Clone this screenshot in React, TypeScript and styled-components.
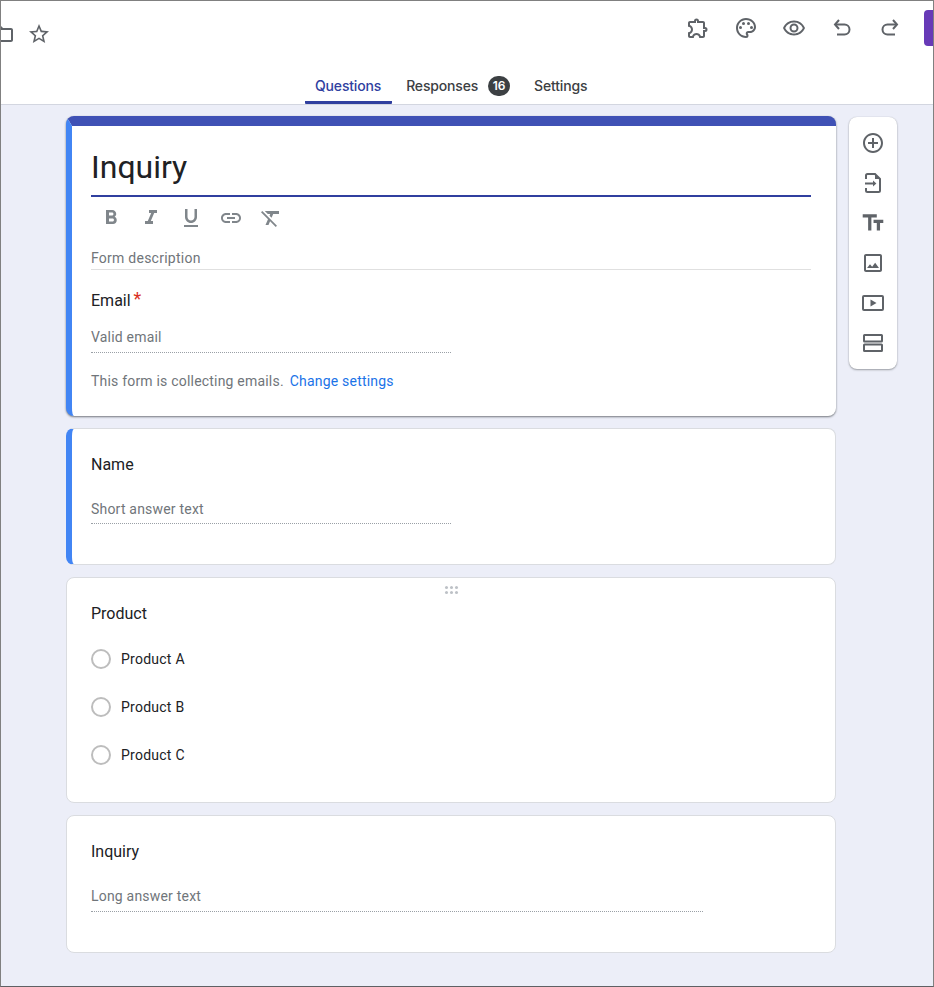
import React from 'react'
import styled, { createGlobalStyle } from 'styled-components'
import {
  MdAddCircleOutline,
  MdFolderOpen,
  MdFormatBold,
  MdFormatClear,
  MdFormatItalic,
  MdFormatUnderlined,
  MdLink,
  MdOutlineExtension,
  MdOutlineImage,
  MdOutlinePalette,
  MdOutlineRemoveRedEye,
  MdStarBorder,
  MdTextFields
} from 'react-icons/md'

const GlobalStyle = createGlobalStyle`
  * {
    box-sizing: border-box;
  }

  html,
  body {
    margin: 0;
    padding: 0;
    background: #ffffff;
  }

  body {
    font-family: Roboto, 'Liberation Sans', sans-serif;
  }
`

const Frame = styled.div`
  width: 934px;
  height: 987px;
  overflow: hidden;
  display: flex;
  flex-direction: column;
  border-top: 1px solid #808080;
  border-left: 1px solid #808080;
  border-right: 1px solid #808080;
  border-bottom: 1px solid #5f6064;
`

const Header = styled.header`
  height: 104px;
  flex-shrink: 0;
  background: #ffffff;
  border-bottom: 1px solid #d3d6e0;
  display: flex;
  flex-direction: column;
`

const TopRow = styled.div`
  height: 68px;
  display: flex;
  justify-content: space-between;
  align-items: flex-start;
`

const DocTools = styled.div`
  display: flex;
  align-items: center;
  gap: 14px;
  padding-top: 21px;
  color: #5f6368;
`

const FolderClip = styled.div`
  width: 12px;
  height: 24px;
  overflow: hidden;
  display: flex;
  justify-content: flex-end;

  svg {
    flex-shrink: 0;
    margin-right: -2px;
  }
`

const Actions = styled.div`
  display: flex;
  align-items: flex-start;
  color: #5f6368;
`

const ActionIcon = styled.span`
  width: 48px;
  height: 24px;
  margin-top: 15px;
  display: flex;
  align-items: center;
  justify-content: center;
`

const PublishEdge = styled.div`
  width: 9px;
  height: 36px;
  margin-top: 9px;
  margin-left: 10px;
  background: #673ab7;
  border-radius: 4px 0 0 4px;
`

const Tabs = styled.nav`
  flex: 1;
  display: flex;
  justify-content: flex-start;
  padding-left: 304px;
`

const Tab = styled.div<{ $active?: boolean }>`
  height: 36px;
  padding: 2px ${(p) => (p.$active ? 11 : 10)}px 0 10px;
  margin-right: 4px;
  display: flex;
  align-items: center;
  gap: 10px;
  font-family: Inter, Roboto, sans-serif;
  font-size: 14px;
  font-weight: 500;
  letter-spacing: -0.17px;
  color: ${(p) => (p.$active ? '#303f9f' : '#3c4043')};
  border-bottom: 3px solid ${(p) => (p.$active ? '#303f9f' : 'transparent')};
  border-radius: 0 0 1px 1px;
`

const Badge = styled.span`
  width: 22px;
  height: 20px;
  border-radius: 10px;
  background: #3c4043;
  color: #ffffff;
  font-size: 12px;
  font-weight: 600;
  letter-spacing: 0;
  display: flex;
  align-items: center;
  justify-content: center;
`

const Main = styled.main`
  flex: 1;
  background: #eceef8;
  padding: 11px 0 0 65px;
  display: flex;
  align-items: flex-start;
  gap: 13px;
`

const Column = styled.div`
  width: 770px;
  display: flex;
  flex-direction: column;
  gap: 12px;
`

const Card = styled.section<{ $height: number; $accent?: boolean }>`
  position: relative;
  height: ${(p) => p.$height}px;
  background: #ffffff;
  border-radius: 8px;
  border: 1px solid #dadce0;
  padding: 0 24px;
  overflow: hidden;
  ${(p) => p.$accent && 'border-left: 6px solid #4285f4; padding-left: 19px;'}
`

const HeadCard = styled.section`
  height: 300px;
  background: #ffffff;
  border-radius: 8px;
  border-top: 10px solid #3f51b5;
  border-left: 6px solid #4285f4;
  padding: 0 25px 0 19px;
  box-shadow: 0 1px 2px 0 rgba(60, 64, 67, 0.5), 0 1px 2px 0 rgba(60, 64, 67, 0.25);
`

const Title = styled.div`
  height: 71px;
  padding-top: 22px;
  border-bottom: 2px solid #303f9f;
  font-size: 32px;
  line-height: 38px;
  color: #202124;
`

const FormatBar = styled.div`
  height: 42px;
  padding-left: 8px;
  display: flex;
  align-items: center;
  gap: 16px;
  color: #80868b;
`

const FormatIcon = styled.span`
  width: 24px;
  height: 24px;
  display: flex;
  align-items: center;
  justify-content: center;
`

const Description = styled.div`
  height: 31px;
  padding-top: 9px;
  border-bottom: 1px solid #e0e0e0;
  font-size: 14px;
  line-height: 20px;
  letter-spacing: 0.25px;
  color: #70757a;
`

const Label = styled.div<{ $top: number }>`
  padding-top: ${(p) => p.$top}px;
  font-size: 16px;
  line-height: 24px;
  color: #202124;
`

const Required = styled.span`
  margin-left: 3px;
  font-size: 18px;
  line-height: 0;
  vertical-align: 1px;
  color: #d93025;
`

const AnswerLine = styled.div<{ $width: number; $top: number; $height: number }>`
  width: ${(p) => p.$width}px;
  margin-top: ${(p) => p.$top}px;
  height: ${(p) => p.$height}px;
  border-bottom: 1px dotted #9aa0a6;
  font-size: 14px;
  line-height: 20px;
  letter-spacing: 0.2px;
  color: #70757a;
`

const Notice = styled.div`
  margin-top: 18px;
  font-size: 14px;
  line-height: 20px;
  letter-spacing: 0.2px;
  color: #70757a;
`

const NoticeLink = styled.a`
  margin-left: 6px;
  color: #1a73e8;
`

const DragHandle = styled.span`
  position: absolute;
  top: 8px;
  left: 378px;
  display: grid;
  grid-template-columns: repeat(3, 3px);
  gap: 2px;

  & > i {
    width: 3px;
    height: 3px;
    border-radius: 50%;
    background: #bdc1c6;
  }
`

const Options = styled.div`
  margin-top: 9px;
  display: flex;
  flex-direction: column;
`

const Option = styled.div`
  height: 48px;
  display: flex;
  align-items: center;
  gap: 10px;
  font-size: 14px;
  letter-spacing: 0.25px;
  color: #202124;
`

const Radio = styled.span`
  width: 20px;
  height: 20px;
  border: 2px solid #bdbdbd;
  border-radius: 50%;
`

const SideBar = styled.aside`
  width: 48px;
  height: 252px;
  margin-top: 1px;
  padding: 6px 0;
  background: #ffffff;
  border-radius: 8px;
  color: #5f6368;
  display: flex;
  flex-direction: column;
  box-shadow: 0 1px 2px 0 rgba(60, 64, 67, 0.45), 0 0 1px 0 rgba(60, 64, 67, 0.25);
`

const SideIcon = styled.span`
  height: 40px;
  display: flex;
  align-items: center;
  justify-content: center;
`

const UndoIcon = () => (
  <svg width="24" height="24" viewBox="0 0 24 24" fill="none" stroke="currentColor" strokeWidth="2">
    <path d="M9 4L5 8.5L9 13" />
    <path d="M5 8.5h9.5a5 5 0 0 1 0 10H7" />
  </svg>
)

const RedoIcon = () => (
  <svg width="24" height="24" viewBox="0 0 24 24" fill="none" stroke="currentColor" strokeWidth="2">
    <path d="M15 4l4 4.5L15 13" />
    <path d="M19 8.5H9.5a5 5 0 0 0 0 10H17" />
  </svg>
)

const ImportIcon = () => (
  <svg width="24" height="24" viewBox="0 0 24 24" fill="none" stroke="currentColor" strokeWidth="2">
    <path d="M5 8V4.5A1.5 1.5 0 0 1 6.5 3H14l5 5v11.5a1.5 1.5 0 0 1-1.5 1.5h-11A1.5 1.5 0 0 1 5 19.5V17" />
    <path d="M14 3v5h5" fill="currentColor" stroke="none" />
    <path d="M4 12.5h10" />
    <path d="M12 9.6l3.4 2.9-3.4 2.9z" fill="currentColor" stroke="none" />
  </svg>
)

const VideoIcon = () => (
  <svg width="24" height="24" viewBox="0 0 24 24" fill="none" stroke="currentColor" strokeWidth="2">
    <rect x="2" y="5" width="20" height="14" rx="1" />
    <path d="M9.5 8.5l6 3.5-6 3.5z" fill="currentColor" stroke="none" />
  </svg>
)

const SectionIcon = () => (
  <svg width="24" height="24" viewBox="0 0 24 24" fill="none" stroke="currentColor" strokeWidth="2">
    <rect x="3" y="4" width="18" height="6.5" rx="0.5" />
    <rect x="3" y="13.5" width="18" height="6.5" rx="0.5" />
  </svg>
)

const options = ['Product A', 'Product B', 'Product C']

const App = () => (
  <>
    <GlobalStyle />
    <Frame>
      <Header>
        <TopRow>
          <DocTools>
            <FolderClip>
              <MdFolderOpen size={24} />
            </FolderClip>
            <MdStarBorder size={24} />
          </DocTools>
          <Actions>
            <ActionIcon><MdOutlineExtension size={24} /></ActionIcon>
            <ActionIcon><MdOutlinePalette size={24} /></ActionIcon>
            <ActionIcon><MdOutlineRemoveRedEye size={24} /></ActionIcon>
            <ActionIcon><UndoIcon /></ActionIcon>
            <ActionIcon><RedoIcon /></ActionIcon>
            <PublishEdge />
          </Actions>
        </TopRow>
        <Tabs>
          <Tab $active>Questions</Tab>
          <Tab>
            Responses
            <Badge>16</Badge>
          </Tab>
          <Tab>Settings</Tab>
        </Tabs>
      </Header>
      <Main>
        <Column>
          <HeadCard>
            <Title>Inquiry</Title>
            <FormatBar>
              <FormatIcon><MdFormatBold size={24} /></FormatIcon>
              <FormatIcon><MdFormatItalic size={24} /></FormatIcon>
              <FormatIcon><MdFormatUnderlined size={24} /></FormatIcon>
              <FormatIcon><MdLink size={24} /></FormatIcon>
              <FormatIcon><MdFormatClear size={24} /></FormatIcon>
            </FormatBar>
            <Description>Form description</Description>
            <Label $top={19}>
              Email<Required>*</Required>
            </Label>
            <AnswerLine $width={360} $top={14} $height={26}>Valid email</AnswerLine>
            <Notice>
              This form is collecting emails.
              <NoticeLink>Change settings</NoticeLink>
            </Notice>
          </HeadCard>
          <Card $height={137} $accent>
            <Label $top={24}>Name</Label>
            <AnswerLine $width={360} $top={22} $height={25}>Short answer text</AnswerLine>
          </Card>
          <Card $height={226}>
            <DragHandle>
              {Array.from({ length: 6 }, (_, i) => <i key={i} />)}
            </DragHandle>
            <Label $top={24}>Product</Label>
            <Options>
              {options.map((option) => (
                <Option key={option}>
                  <Radio />
                  {option}
                </Option>
              ))}
            </Options>
          </Card>
          <Card $height={138}>
            <Label $top={24}>Inquiry</Label>
            <AnswerLine $width={612} $top={22} $height={26}>Long answer text</AnswerLine>
          </Card>
        </Column>
        <SideBar>
          <SideIcon><MdAddCircleOutline size={24} /></SideIcon>
          <SideIcon><ImportIcon /></SideIcon>
          <SideIcon><MdTextFields size={26} /></SideIcon>
          <SideIcon><MdOutlineImage size={24} /></SideIcon>
          <SideIcon><VideoIcon /></SideIcon>
          <SideIcon><SectionIcon /></SideIcon>
        </SideBar>
      </Main>
    </Frame>
  </>
)

export default App
